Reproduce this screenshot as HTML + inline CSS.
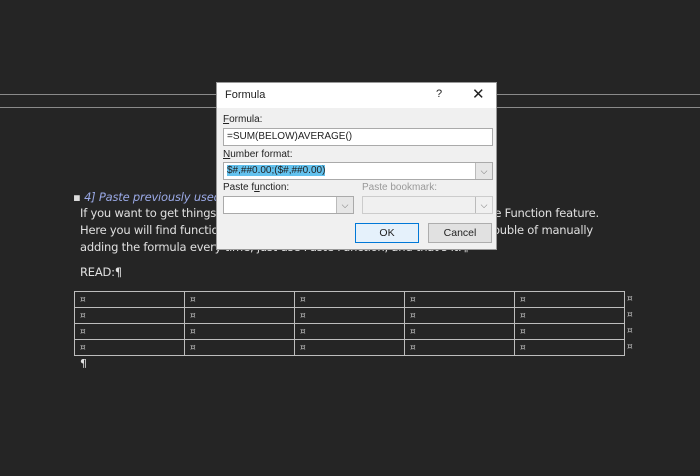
<!DOCTYPE html>
<html><head><meta charset="utf-8"><style>
*{margin:0;padding:0;box-sizing:border-box}
body{width:700px;height:476px;background:#252525;position:relative;overflow:hidden;font-family:"DejaVu Sans","Liberation Sans",sans-serif;}
.hl{position:absolute;left:0;width:700px;height:1px;background:#8a8a8a}
.t{position:absolute;color:#e0e0e0;font-size:11.5px;white-space:nowrap;letter-spacing:-0.2px}
table{position:absolute;left:74px;top:291px;border-collapse:collapse}
td{width:110px;height:16px;border:1.5px solid #bdbdbd;color:#bbb;font-size:9px;padding-left:5px;vertical-align:middle}
.mk{position:absolute;left:627px;color:#bbb;font-size:9px}
.dlg{position:absolute;left:216px;top:82px;width:281px;height:168px;background:#f0f0f0;border:1px solid #999;font-size:10px;color:#222;font-family:"Liberation Sans",sans-serif}
.tb{height:25px;background:#fff;position:relative}
.lab{position:absolute;font-size:10px;color:#222}
.inp{position:absolute;background:#fff;border:1px solid #aaa;height:18px;font-size:10px;padding-left:3px;line-height:16px}
.dd{position:absolute;right:0;top:0;width:17px;height:16px;background:#e6e6e6;border-left:1px solid #bbb;color:#666;font-size:9px;text-align:center;line-height:16px}
.btn{position:absolute;height:20px;width:64px;border:1px solid #adadad;background:#e1e1e1;text-align:center;line-height:18px;font-size:10.5px}
</style></head><body>
<div class="hl" style="top:94px"></div>
<div class="hl" style="top:107px"></div>

<div class="t" style="left:73px;top:190px;color:#9aa9e6;font-style:italic"><span style="color:#ddd;font-style:normal">▪</span> 4] Paste previously used Functions</div>
<div class="t" style="left:80px;top:206px">If you want to get things done quickly, you can take advantage of the Paste Function feature.</div>
<div class="t" style="left:80px;top:223px">Here you will find functions you’ve used before. So, instead of going the trouble of manually</div>
<div class="t" style="left:80px;top:240px">adding the formula every time, just use Paste Function, and that's it.¶</div>
<div class="t" style="left:80px;top:265px">READ:¶</div>

<table>
<tr><td>¤</td><td>¤</td><td>¤</td><td>¤</td><td>¤</td></tr>
<tr><td>¤</td><td>¤</td><td>¤</td><td>¤</td><td>¤</td></tr>
<tr><td>¤</td><td>¤</td><td>¤</td><td>¤</td><td>¤</td></tr>
<tr><td>¤</td><td>¤</td><td>¤</td><td>¤</td><td>¤</td></tr>
</table>
<div class="mk" style="top:294px">¤</div>
<div class="mk" style="top:310px">¤</div>
<div class="mk" style="top:326px">¤</div>
<div class="mk" style="top:342px">¤</div>
<div class="t" style="left:80px;top:357px;font-size:11px">¶</div>

<div class="dlg">
 <div class="tb"><span style="position:absolute;left:8px;top:6px;font-size:11px">Formula</span>
 <span style="position:absolute;left:219px;top:5px;font-size:11px">?</span>
 <span style="position:absolute;left:255px;top:2px;font-size:15px">✕</span></div>
 <div class="lab" style="left:6px;top:31px"><u>F</u>ormula:</div>
 <div class="inp" style="left:6px;top:45px;width:270px">=SUM(BELOW)AVERAGE()</div>
 <div class="lab" style="left:6px;top:66px"><u>N</u>umber format:</div>
 <div class="inp" style="left:6px;top:79px;width:270px"><span style="background:#63c2ee">$#,##0.00;($#,##0.00)</span><div class="dd">⌵</div></div>
 <div class="lab" style="left:6px;top:99px">Paste f<u>u</u>nction:</div>
 <div class="lab" style="left:145px;top:99px;color:#999">Paste bookmark:</div>
 <div class="inp" style="left:6px;top:113px;width:131px"><div class="dd">⌵</div></div>
 <div class="inp" style="left:145px;top:113px;width:131px;background:#f0f0f0;border-color:#ccc"><div class="dd" style="background:#f0f0f0">⌵</div></div>
 <div class="btn" style="left:138px;top:140px;background:#e5f1fb;border-color:#0078d7">OK</div>
 <div class="btn" style="left:211px;top:140px">Cancel</div>
</div>
</body></html>
